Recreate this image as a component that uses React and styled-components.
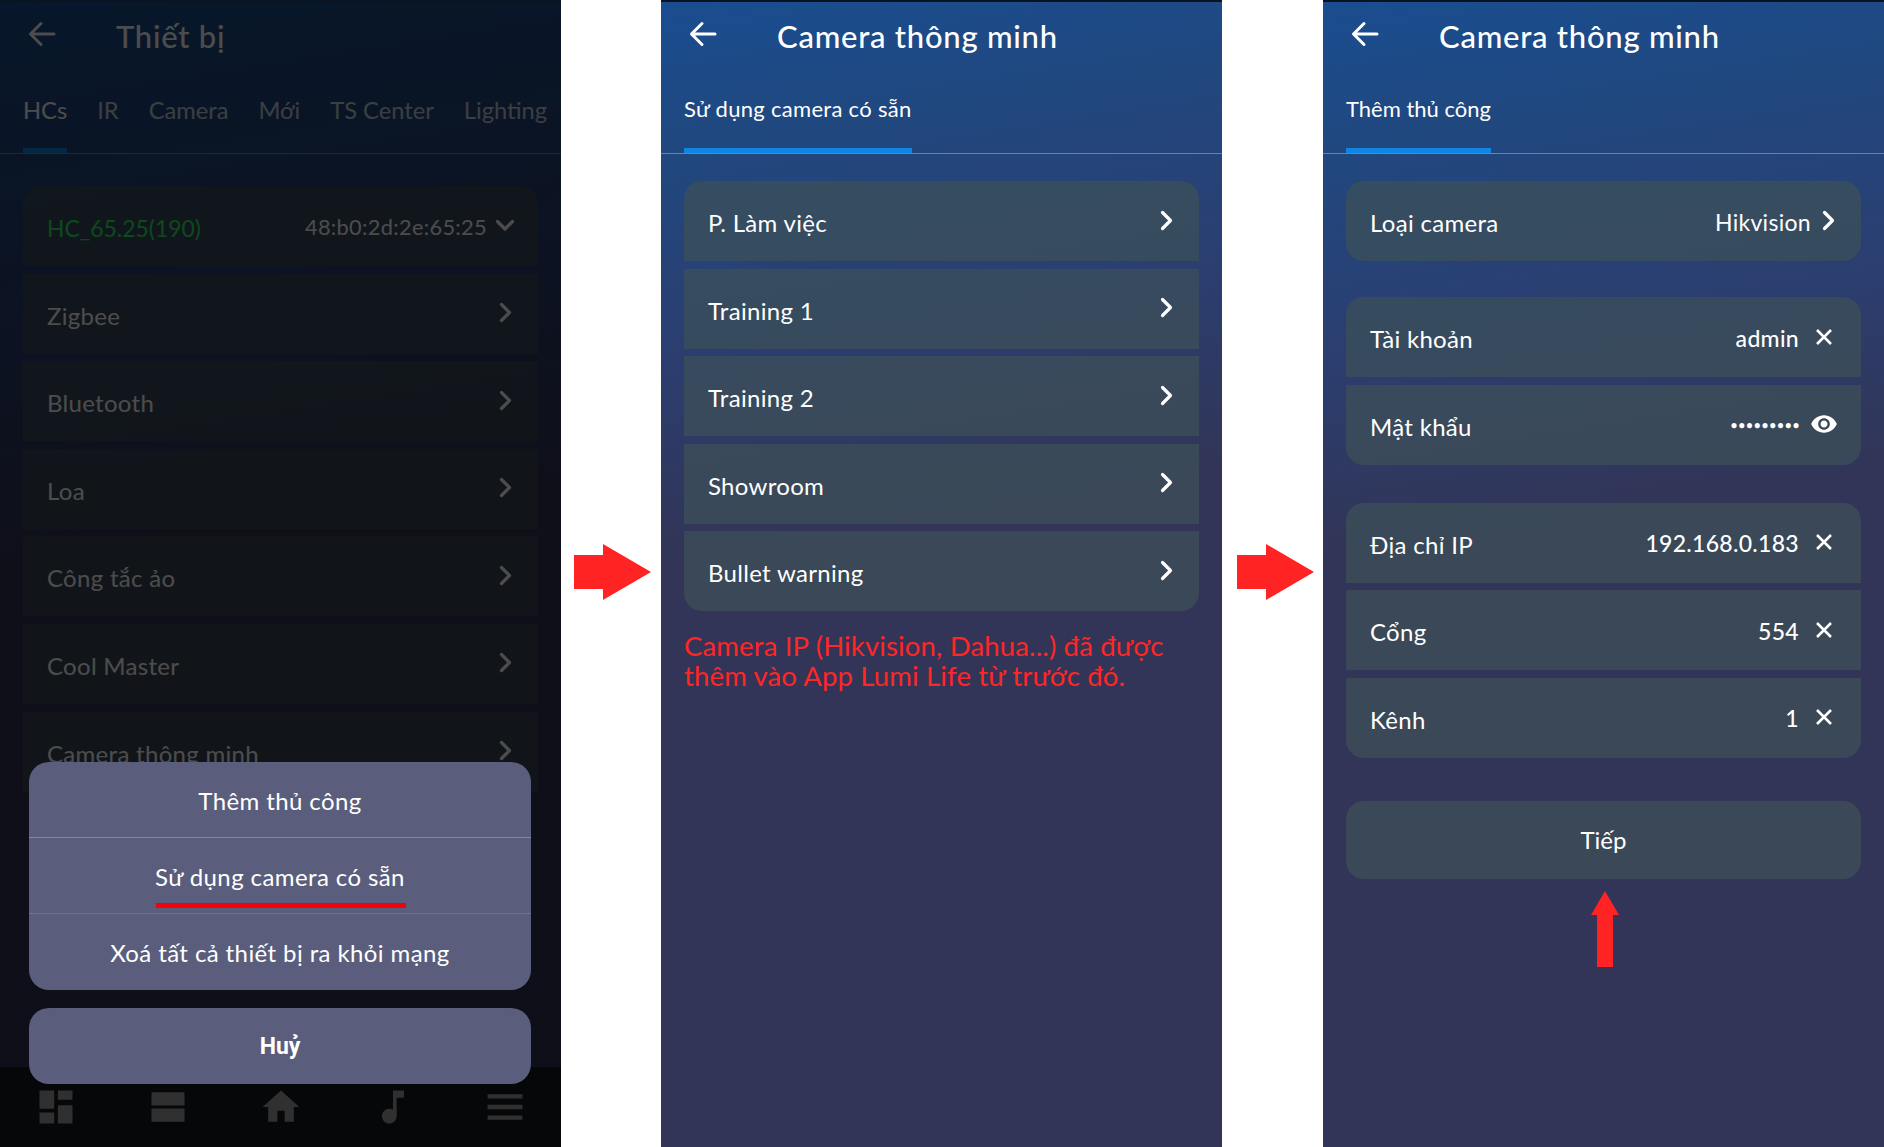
import React from "react";
import styled, { createGlobalStyle } from "styled-components";

const GlobalStyle = createGlobalStyle`
  html, body {
    margin: 0;
    background: #fff;
  }
  * {
    box-sizing: border-box;
  }
`;

const Page = styled.div`
  display: flex;
  width: 1884px;
  height: 1147px;
  overflow: hidden;
  font-family: "Lato", "Noto Sans", sans-serif;
  color: #fff;
`;

const Screen = styled.div`
  position: relative;
  display: flex;
  flex-direction: column;
  flex: 0 0 561px;
  height: 100%;
  overflow: hidden;
  border-top: 2px solid #0b1220;
  background: linear-gradient(171deg, #1a4d90 0%, #20487f 12%, #2a3f72 27%, #323557 45%, #323557 100%);
`;

const ArrowSlot = styled.div`
  display: flex;
  flex: 0 0 ${(p) => p.$width}px;
  align-items: center;
  justify-content: center;
  padding: 0 0 3px ${(p) => p.$shift}px;
`;

const Header = styled.header`
  display: flex;
  flex: 0 0 70px;
  align-items: center;
  padding: 0 0 3px 28px;
  svg {
    flex: 0 0 auto;
    margin-top: -3px;
  }
`;

const Title = styled.h1`
  margin: 0 0 0 60px;
  font-size: 31px;
  font-weight: 500;
  letter-spacing: 0.75px;
`;

const Tabs = styled.nav`
  display: flex;
  flex: 0 0 81px;
  gap: 30px;
  padding: 0 23px;
  border-bottom: 1px solid rgba(190, 205, 230, 0.45);
`;

const Tab = styled.div`
  display: flex;
  align-items: flex-start;
  height: 81px;
  padding-top: ${(p) => p.$pad || 21}px;
  font-size: ${(p) => p.$size || 22}px;
  line-height: 32px;
  letter-spacing: ${(p) => p.$tracking || 0}px;
  white-space: nowrap;
  border-bottom: ${(p) => (p.$active ? "5px solid #0f85e4" : "none")};
  color: ${(p) => (p.$muted ? "rgba(255,255,255,.75)" : "#fff")};
`;

const Body = styled.main`
  display: flex;
  flex: 1;
  flex-direction: column;
  min-height: 0;
  padding: ${(p) => p.$top || 27}px 23px 0;
`;

const Group = styled.section`
  display: flex;
  flex-direction: column;
  gap: 7.6px;
  margin-bottom: ${(p) => p.$after || 36}px;
`;

const Row = styled.div`
  display: flex;
  flex: 0 0 80px;
  align-items: center;
  justify-content: space-between;
  padding: 3px ${(p) => p.$right || 25}px 0 24px;
  background: rgba(61, 79, 88, 0.74);
  border-radius: ${(p) => (p.$first ? "18px 18px" : "0 0")} ${(p) => (p.$last ? "18px 18px" : "0 0")};
  font-size: 24px;
  letter-spacing: 0.3px;
  > svg {
    margin-top: -5px;
  }
`;

const Value = styled.div`
  display: flex;
  align-items: center;
  gap: ${(p) => p.$gap || 13}px;
  margin-top: -2px;
  font-size: ${(p) => p.$size || 23}px;
  font-weight: ${(p) => (p.$strong ? 500 : 400)};
  svg {
    margin-top: -2px;
  }
`;

const HubName = styled.span`
  font-size: 22.9px;
  letter-spacing: 0;
  color: #30f060;
`;

const PasswordDots = styled.span`
  font-size: 13px;
  letter-spacing: 0.2px;
`;

const Notice = styled.p`
  margin: 0;
  font-size: 27.5px;
  line-height: 30px;
  letter-spacing: 0.15px;
  color: #ff2626;
`;

const NextButton = styled.div`
  display: flex;
  align-items: center;
  justify-content: center;
  height: 78px;
  margin-top: 7px;
  border-radius: 18px;
  background: rgba(61, 79, 88, 0.74);
  font-size: 24px;
`;

const UpMark = styled.div`
  display: flex;
  justify-content: center;
  margin: 12px 0 0 3px;
`;

const BottomNav = styled.footer`
  display: flex;
  flex: 0 0 80px;
  align-items: center;
  justify-content: space-between;
  padding: 0 34px 0 34px;
  background: #111820;
`;

const Dim = styled.div`
  position: absolute;
  inset: 0;
  background: rgba(0, 0, 0, 0.7);
`;

const Sheet = styled.div`
  position: absolute;
  left: 29px;
  right: 30px;
  top: 760px;
  display: flex;
  flex-direction: column;
  gap: 18px;
`;

const SheetCard = styled.div`
  display: flex;
  flex-direction: column;
  overflow: hidden;
  border-radius: 20px;
  background: #5a5e7c;
`;

const SheetItem = styled.div`
  position: relative;
  display: flex;
  align-items: center;
  justify-content: center;
  height: ${(p) => p.$height || 76}px;
  padding-top: 1px;
  font-size: 24px;
  letter-spacing: 0.4px;
  border-bottom: ${(p) => (p.$line ? "1px solid " + p.$line : "none")};
`;

const CancelItem = styled(SheetItem)`
  font-family: "Roboto", sans-serif;
  font-size: 23px;
  font-weight: 700;
  letter-spacing: 0;
`;

const RedLine = styled.span`
  position: absolute;
  left: 127px;
  right: 125px;
  bottom: 5px;
  height: 5px;
  background: #f4000a;
`;

const BackArrow = () => (
  <svg width="28" height="26" viewBox="0 0 28 26" fill="none" stroke="#fff" strokeWidth="3" strokeLinecap="round" strokeLinejoin="round">
    <path d="M26 13H3M13 2.5 2.5 13 13 23.5" />
  </svg>
);

const Chevron = () => (
  <svg width="13" height="21" viewBox="0 0 13 21" fill="none" stroke="#fff" strokeWidth="3.2" strokeLinecap="round" strokeLinejoin="round">
    <path d="M2.5 2.5 10.5 10.5 2.5 18.5" />
  </svg>
);

const ChevronDown = () => (
  <svg width="20" height="13" viewBox="0 0 20 13" fill="none" stroke="#fff" strokeWidth="3.2" strokeLinecap="round" strokeLinejoin="round">
    <path d="M2.5 2.5 10 10 17.5 2.5" />
  </svg>
);

const Cross = () => (
  <svg width="24" height="24" viewBox="0 0 24 24" fill="none" stroke="#fff" strokeWidth="2.6">
    <path d="M5 5 19 19M19 5 5 19" />
  </svg>
);

const Eye = () => (
  <svg width="28" height="28" viewBox="0 0 24 24" fill="#fff">
    <path d="M12 4.5C7 4.5 2.73 7.61 1 12c1.73 4.39 6 7.5 11 7.5s9.27-3.11 11-7.5c-1.73-4.39-6-7.5-11-7.5zM12 17c-2.76 0-5-2.24-5-5s2.24-5 5-5 5 2.24 5 5-2.24 5-5 5zm0-8c-1.66 0-3 1.34-3 3s1.34 3 3 3 3-1.34 3-3-1.34-3-3-3z" />
  </svg>
);

const RightArrow = () => (
  <svg width="77" height="56" viewBox="0 0 77 56" fill="#ff2323">
    <path d="M0 11H29V0L77 28 29 56V45H0Z" />
  </svg>
);

const UpArrow = () => (
  <svg width="28" height="76" viewBox="0 0 28 76" fill="#ff2323">
    <path d="M14 0 28 24H22V76H6V24H0Z" />
  </svg>
);

const NavIcon = ({ d }) => (
  <svg width="44" height="44" viewBox="0 0 24 24" fill="#a2a2a2">
    <path d={d} />
  </svg>
);

const navIcons = [
  "M3 13h8V3H3v10zm0 8h8v-6H3v6zm10 0h8V11h-8v10zm0-19v6h8V3h-8z",
  "M3 4h18v7.2H3zM3 12.8h18V20H3z",
  "M10 20v-6h4v6h5v-8h3L12 3 2 12h3v8z",
  "M12 3v10.55c-.59-.34-1.27-.55-2-.55-2.21 0-4 1.79-4 4s1.79 4 4 4 4-1.79 4-4V7h4V3h-6z",
  "M2.5 5h19v2.4h-19zM2.5 10.8h19v2.4h-19zM2.5 16.6h19V19h-19z",
];

const hubTabs = ["IR", "Camera", "Mới", "TS Center", "Lighting"];
const hubRows = ["Zigbee", "Bluetooth", "Loa", "Công tắc ảo", "Cool Master", "Camera thông minh"];
const rooms = ["P. Làm việc", "Training 1", "Training 2", "Showroom", "Bullet warning"];
const network = [
  ["Địa chỉ IP", "192.168.0.183"],
  ["Cổng", "554"],
  ["Kênh", "1"],
];

function DeviceScreen() {
  return (
    <Screen>
      <Header>
        <BackArrow />
        <Title>Thiết bị</Title>
      </Header>
      <Tabs>
        <Tab $active $size={23.7} $pad={22}>HCs</Tab>
        {hubTabs.map((t) => (
          <Tab key={t} $size={23.7} $pad={22} $muted>{t}</Tab>
        ))}
      </Tabs>
      <Body $top={32}>
        <Group>
          <Row $first $right={23}>
            <HubName>HC_65.25(190)</HubName>
            <Value $size={21.8} $gap={8}>48:b0:2d:2e:65:25 <ChevronDown /></Value>
          </Row>
          {hubRows.map((r) => (
            <Row key={r} $right={26}>
              {r}
              <Chevron />
            </Row>
          ))}
        </Group>
      </Body>
      <BottomNav>
        {navIcons.map((d) => (
          <NavIcon key={d} d={d} />
        ))}
      </BottomNav>
      <Dim />
      <Sheet>
        <SheetCard>
          <SheetItem $line="#8387a5">Thêm thủ công</SheetItem>
          <SheetItem $line="#6f7391">
            Sử dụng camera có sẵn
            <RedLine />
          </SheetItem>
          <SheetItem>Xoá tất cả thiết bị ra khỏi mạng</SheetItem>
        </SheetCard>
        <SheetCard>
          <CancelItem>Huỷ</CancelItem>
        </SheetCard>
      </Sheet>
    </Screen>
  );
}

function ExistingCameraScreen() {
  return (
    <Screen>
      <Header>
        <BackArrow />
        <Title>Camera thông minh</Title>
      </Header>
      <Tabs>
        <Tab $active $tracking={0.3}>Sử dụng camera có sẵn</Tab>
      </Tabs>
      <Body>
        <Group $after={20}>
          {rooms.map((r, i) => (
            <Row key={r} $first={i === 0} $last={i === rooms.length - 1} $right={26}>
              {r}
              <Chevron />
            </Row>
          ))}
        </Group>
        <Notice>
          Camera IP (Hikvision, Dahua...) đã được
          <br />
          thêm vào App Lumi Life từ trước đó.
        </Notice>
      </Body>
    </Screen>
  );
}

function ManualScreen() {
  return (
    <Screen>
      <Header>
        <BackArrow />
        <Title>Camera thông minh</Title>
      </Header>
      <Tabs>
        <Tab $active>Thêm thủ công</Tab>
      </Tabs>
      <Body>
        <Group>
          <Row $first $last $right={26}>
            Loại camera
            <Value $gap={11}>Hikvision <Chevron /></Value>
          </Row>
        </Group>
        <Group $after={38}>
          <Row $first>
            Tài khoản
            <Value $strong>admin <Cross /></Value>
          </Row>
          <Row $last $right={23}>
            Mật khẩu
            <Value $strong $gap={10}><PasswordDots>•••••••••</PasswordDots> <Eye /></Value>
          </Row>
        </Group>
        <Group>
          {network.map(([label, value], i) => (
            <Row key={label} $first={i === 0} $last={i === network.length - 1}>
              {label}
              <Value $strong>{value} <Cross /></Value>
            </Row>
          ))}
        </Group>
        <NextButton>Tiếp</NextButton>
        <UpMark>
          <UpArrow />
        </UpMark>
      </Body>
    </Screen>
  );
}

export default function App() {
  return (
    <Page>
      <GlobalStyle />
      <DeviceScreen />
      <ArrowSlot $width={100} $shift={2}>
        <RightArrow />
      </ArrowSlot>
      <ExistingCameraScreen />
      <ArrowSlot $width={101} $shift={6}>
        <RightArrow />
      </ArrowSlot>
      <ManualScreen />
    </Page>
  );
}
